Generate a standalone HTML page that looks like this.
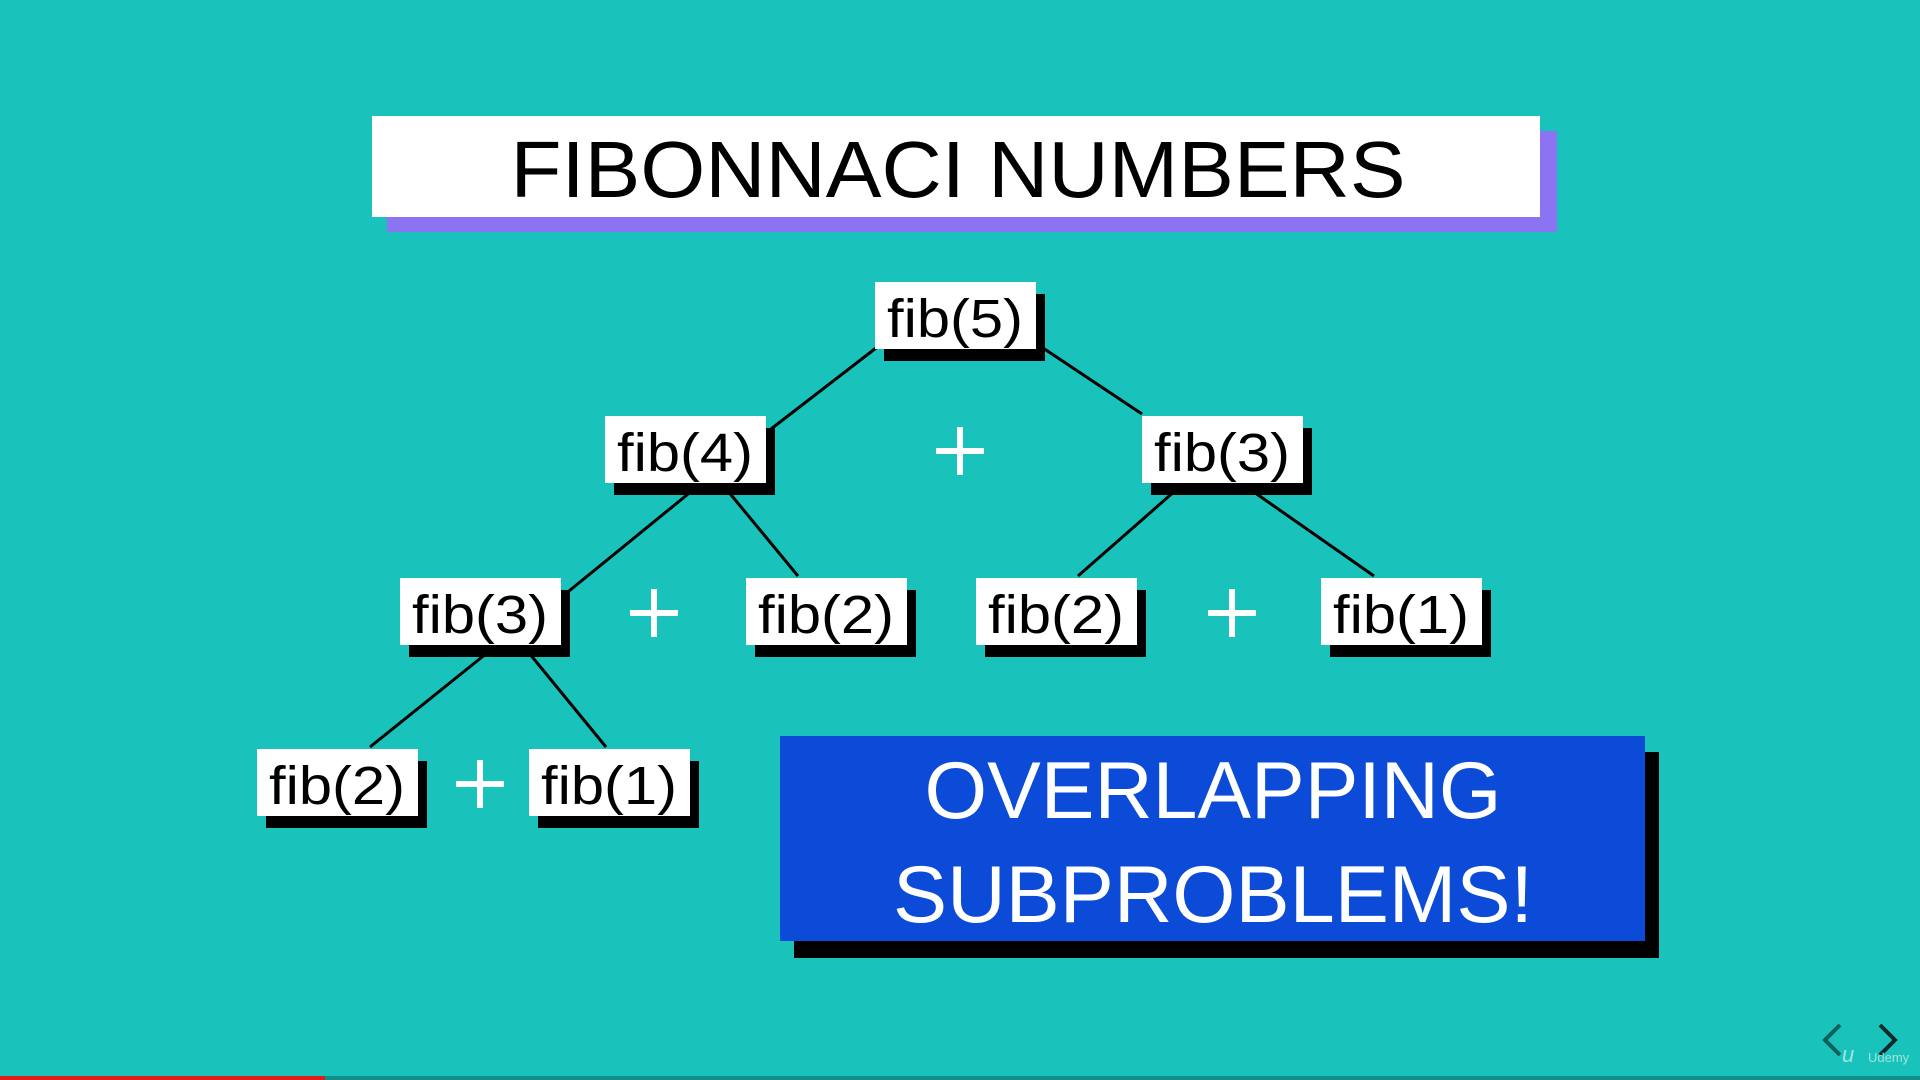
<!DOCTYPE html>
<html><head><meta charset="utf-8"><style>
html,body{margin:0;padding:0;background:#19c3bb;width:1920px;height:1080px;overflow:hidden}
svg{display:block}
text{font-family:"Liberation Sans",sans-serif}
</style></head><body>
<svg width="1920" height="1080" viewBox="0 0 1920 1080">
<rect width="1920" height="1080" fill="#19c3bb"/>
<!-- title -->
<rect x="387" y="131" width="1170" height="101" fill="#8b73f2"/>
<rect x="372" y="116" width="1168" height="101" fill="#fff"/>
<text x="958" y="197" font-size="80" text-anchor="middle" textLength="895" lengthAdjust="spacingAndGlyphs" fill="#000">FIBONNACI NUMBERS</text>
<!-- lines -->
<g stroke="#000" stroke-width="3">
<line x1="876" y1="348" x2="771" y2="429"/>
<line x1="1043" y1="348" x2="1142" y2="414"/>
<line x1="693" y1="490" x2="569" y2="591"/>
<line x1="727" y1="490" x2="798" y2="576"/>
<line x1="1176" y1="490" x2="1078" y2="576"/>
<line x1="1251" y1="490" x2="1374" y2="576"/>
<line x1="487" y1="653" x2="370" y2="747"/>
<line x1="529" y1="653" x2="606" y2="747"/>
</g>
<!-- nodes -->
<g font-size="54" fill="#000">
<g><rect x="884" y="294" width="161" height="67" fill="#000"/><rect x="875" y="282" width="161" height="67" fill="#fff"/><text x="887" y="337" textLength="136" lengthAdjust="spacingAndGlyphs">fib(5)</text></g>
<g><rect x="614" y="428" width="161" height="67" fill="#000"/><rect x="605" y="416" width="161" height="67" fill="#fff"/><text x="617" y="471" textLength="136" lengthAdjust="spacingAndGlyphs">fib(4)</text></g>
<g><rect x="1151" y="428" width="161" height="67" fill="#000"/><rect x="1142" y="416" width="161" height="67" fill="#fff"/><text x="1154" y="471" textLength="136" lengthAdjust="spacingAndGlyphs">fib(3)</text></g>
<g><rect x="409" y="590" width="161" height="67" fill="#000"/><rect x="400" y="578" width="161" height="67" fill="#fff"/><text x="412" y="633" textLength="136" lengthAdjust="spacingAndGlyphs">fib(3)</text></g>
<g><rect x="755" y="590" width="161" height="67" fill="#000"/><rect x="746" y="578" width="161" height="67" fill="#fff"/><text x="758" y="633" textLength="136" lengthAdjust="spacingAndGlyphs">fib(2)</text></g>
<g><rect x="985" y="590" width="161" height="67" fill="#000"/><rect x="976" y="578" width="161" height="67" fill="#fff"/><text x="988" y="633" textLength="136" lengthAdjust="spacingAndGlyphs">fib(2)</text></g>
<g><rect x="1330" y="590" width="161" height="67" fill="#000"/><rect x="1321" y="578" width="161" height="67" fill="#fff"/><text x="1333" y="633" textLength="136" lengthAdjust="spacingAndGlyphs">fib(1)</text></g>
<g><rect x="266" y="761" width="161" height="67" fill="#000"/><rect x="257" y="749" width="161" height="67" fill="#fff"/><text x="269" y="804" textLength="136" lengthAdjust="spacingAndGlyphs">fib(2)</text></g>
<g><rect x="538" y="761" width="161" height="67" fill="#000"/><rect x="529" y="749" width="161" height="67" fill="#fff"/><text x="541" y="804" textLength="136" lengthAdjust="spacingAndGlyphs">fib(1)</text></g>
</g>
<!-- pluses -->
<g stroke="#fff" stroke-width="6">
<line x1="936" y1="451" x2="984" y2="451"/><line x1="960" y1="427" x2="960" y2="475"/>
<line x1="630" y1="613" x2="678" y2="613"/><line x1="654" y1="589" x2="654" y2="637"/>
<line x1="1208" y1="613" x2="1256" y2="613"/><line x1="1232" y1="589" x2="1232" y2="637"/>
<line x1="456" y1="784" x2="504" y2="784"/><line x1="480" y1="760" x2="480" y2="808"/>
</g>
<!-- blue box -->
<rect x="794" y="752" width="865" height="206" fill="#000"/>
<rect x="780" y="736" width="865" height="205" fill="#0b4bd8"/>
<text x="1213" y="818" font-size="81" fill="#fff" text-anchor="middle" textLength="577" lengthAdjust="spacingAndGlyphs">OVERLAPPING</text>
<text x="1213" y="922" font-size="81" fill="#fff" text-anchor="middle" textLength="640" lengthAdjust="spacingAndGlyphs">SUBPROBLEMS!</text>
<!-- nav -->
<polyline points="1840,1025 1825,1040 1840,1055" fill="none" stroke="#0f5f5a" stroke-width="4"/>
<polyline points="1880,1025 1895,1040 1880,1055" fill="none" stroke="#0b2b2a" stroke-width="4"/>
<text x="1842" y="1062" font-size="22" font-style="italic" fill="#9fe3df">u</text>
<text x="1868" y="1062" font-size="13" fill="#9fe3df">Udemy</text>
<!-- bottom bar -->
<rect x="0" y="1076" width="1920" height="4" fill="#128f89"/>
<rect x="0" y="1076" width="325" height="4" fill="#e21b1b"/>
</svg>
</body></html>
